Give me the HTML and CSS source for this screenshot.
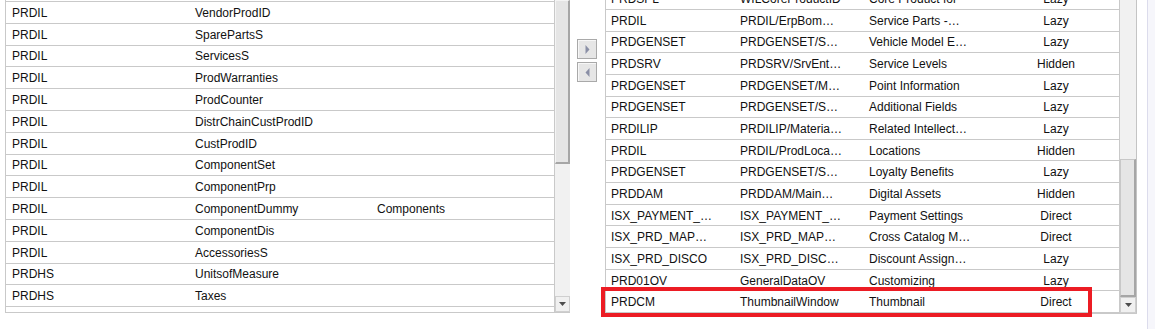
FILE: index.html
```html
<!DOCTYPE html>
<html lang="en">
<head>
    <meta charset="UTF-8">
    <title>Assignment Blocks</title>
    <link rel="stylesheet" href="styles.css">
</head>
<body>
    <div class="window">

        <!-- available blocks -->
        <div class="pane pane-left">
            <div class="grid-view">
                <div class="rows rows-left">
                    <div class="row"><span>PRDIL</span><span>VendorProdID</span><span></span></div>
                    <div class="row"><span>PRDIL</span><span>SparePartsS</span><span></span></div>
                    <div class="row"><span>PRDIL</span><span>ServicesS</span><span></span></div>
                    <div class="row"><span>PRDIL</span><span>ProdWarranties</span><span></span></div>
                    <div class="row"><span>PRDIL</span><span>ProdCounter</span><span></span></div>
                    <div class="row"><span>PRDIL</span><span>DistrChainCustProdID</span><span></span></div>
                    <div class="row"><span>PRDIL</span><span>CustProdID</span><span></span></div>
                    <div class="row"><span>PRDIL</span><span>ComponentSet</span><span></span></div>
                    <div class="row"><span>PRDIL</span><span>ComponentPrp</span><span></span></div>
                    <div class="row"><span>PRDIL</span><span>ComponentDummy</span><span>Components</span></div>
                    <div class="row"><span>PRDIL</span><span>ComponentDis</span><span></span></div>
                    <div class="row"><span>PRDIL</span><span>AccessoriesS</span><span></span></div>
                    <div class="row"><span>PRDHS</span><span>UnitsofMeasure</span><span></span></div>
                    <div class="row"><span>PRDHS</span><span>Taxes</span><span></span></div>
                    <div class="row"><span>PRDHS</span><span>GTIN</span><span></span></div>
                </div>
            </div>
            <div class="vscroll vscroll-left">
                <div class="thumb thumb-left"></div>
                <div class="track"></div>
                <div class="scroll-btn">
                    <svg width="7" height="4" viewBox="0 0 7 4"><polygon points="0,0 7,0 3.5,4" fill="#4d4d4d"/></svg>
                </div>
            </div>
        </div>

        <!-- move buttons -->
        <div class="movers">
            <button class="mover">
                <svg width="5" height="9" viewBox="0 0 5 9"><polygon points="0.5,0 4.5,4.5 0.5,9" fill="#8a8fa6"/></svg>
            </button>
            <button class="mover">
                <svg width="5" height="9" viewBox="0 0 5 9"><polygon points="4.5,0 0.5,4.5 4.5,9" fill="#8a8fa6"/></svg>
            </button>
        </div>

        <!-- displayed blocks -->
        <div class="pane pane-right">
            <div class="grid-view">
                <div class="rows rows-right">
                    <div class="row"><span>PRDSPL</span><span>WILCoreProductID</span><span>Core Product for</span><span class="mode">Lazy</span></div>
                    <div class="row"><span>PRDIL</span><span>PRDIL/ErpBom…</span><span>Service Parts -…</span><span class="mode">Lazy</span></div>
                    <div class="row"><span>PRDGENSET</span><span>PRDGENSET/S…</span><span>Vehicle Model E…</span><span class="mode">Lazy</span></div>
                    <div class="row"><span>PRDSRV</span><span>PRDSRV/SrvEnt…</span><span>Service Levels</span><span class="mode">Hidden</span></div>
                    <div class="row"><span>PRDGENSET</span><span>PRDGENSET/M…</span><span>Point Information</span><span class="mode">Lazy</span></div>
                    <div class="row"><span>PRDGENSET</span><span>PRDGENSET/S…</span><span>Additional Fields</span><span class="mode">Lazy</span></div>
                    <div class="row"><span>PRDILIP</span><span>PRDILIP/Materia…</span><span>Related Intellect…</span><span class="mode">Lazy</span></div>
                    <div class="row"><span>PRDIL</span><span>PRDIL/ProdLoca…</span><span>Locations</span><span class="mode">Hidden</span></div>
                    <div class="row"><span>PRDGENSET</span><span>PRDGENSET/S…</span><span>Loyalty Benefits</span><span class="mode">Lazy</span></div>
                    <div class="row"><span>PRDDAM</span><span>PRDDAM/Main…</span><span>Digital Assets</span><span class="mode">Hidden</span></div>
                    <div class="row"><span>ISX_PAYMENT_…</span><span>ISX_PAYMENT_…</span><span>Payment Settings</span><span class="mode">Direct</span></div>
                    <div class="row"><span>ISX_PRD_MAP…</span><span>ISX_PRD_MAP…</span><span>Cross Catalog M…</span><span class="mode">Direct</span></div>
                    <div class="row"><span>ISX_PRD_DISCO</span><span>ISX_PRD_DISC…</span><span>Discount Assign…</span><span class="mode">Lazy</span></div>
                    <div class="row"><span>PRD01OV</span><span>GeneralDataOV</span><span>Customizing</span><span class="mode">Lazy</span></div>
                    <div class="row"><span>PRDCM</span><span>ThumbnailWindow</span><span>Thumbnail</span><span class="mode">Direct</span></div>
                </div>
            </div>
            <div class="vscroll vscroll-right">
                <div class="track track-top"></div>
                <div class="thumb thumb-right"></div>
                <div class="scroll-btn">
                    <svg width="7" height="4" viewBox="0 0 7 4"><polygon points="0,0 7,0 3.5,4" fill="#4d4d4d"/></svg>
                </div>
            </div>
            <!-- rote Markierung um die letzte Zeile -->
            <i class="highlight"></i>
        </div>

        <div class="edge"></div>
    </div>
</body>
</html>
```

FILE: styles.css
```css
/* Grundlayout */
* {
    margin: 0;
    padding: 0;
    box-sizing: border-box;
}

body {
    font-family: "Liberation Sans", Arial, sans-serif;
    font-size: 12px;
    color: #111;
    background: #fff;
    width: 1155px;
    height: 329px;
    overflow: hidden;
}

.window {
    display: flex;
    align-items: flex-start;
    height: 329px;
}

/* Listen */
.pane {
    display: flex;
    border-bottom: 1px solid #c9c9c9;
}

.pane-left {
    margin-left: 5px;
    width: 565px;
    height: 313px;
}

.pane-right {
    position: relative;
    width: 532px;
    height: 314px;
}

.grid-view {
    flex: 1;
    border-left: 1px solid #c9c9c9;
    border-right: 1px solid #c9c9c9;
    overflow: hidden;
}

.rows-left {
    margin-top: 1px;
    border-top: 1px solid #c9c9c9;
}

.rows-right {
    margin-top: -11.65px;
}

.row {
    display: grid;
    height: 21.65px;
    align-items: center;
    border-bottom: 1px solid #c9c9c9;
    white-space: nowrap;
}

.rows-left .row {
    grid-template-columns: 183px 182px 1fr;
    height: 21.8px;
}

.rows-left .row span {
    padding-left: 6px;
}

.rows-right .row {
    grid-template-columns: 129px 129px 129px 1fr;
}

.rows-right .row span {
    padding-left: 5px;
}

.rows-right .row .mode {
    padding-left: 0;
    text-align: center;
}

.row span {
    overflow: hidden;
    line-height: 14px;
    padding-top: 1px;
}

/* Markierung */
.highlight {
    position: absolute;
    left: -4px;
    bottom: -4px;
    width: 491px;
    height: 30px;
    border: 4.5px solid #ec1c24;
}

/* Scrollbalken */
.vscroll {
    display: flex;
    flex-direction: column;
    background: #f1f1f1;
}

.vscroll-left {
    width: 15px;
}

.vscroll-right {
    width: 17px;
    border-right: 1px solid #c4c4c4;
}

.thumb {
    background: #e5e5e5;
    border: 1px solid #f4f4f4;
    border-right: 2px solid #a6a6a6;
    border-bottom: 2px solid #a6a6a6;
}

.thumb-left {
    height: 164px;
}

.thumb-right {
    flex: 1;
    border-top: 1px solid #c8c8c8;
    border-left: 1px solid #c8c8c8;
}

.track {
    flex: 1;
}

.track-top {
    flex: none;
    height: 159px;
}

.scroll-btn {
    height: 16px;
    display: flex;
    align-items: center;
    justify-content: center;
    background: #f0f0f0;
    border: 1px solid #cfcfcf;
}

/* Verschieben */
.movers {
    width: 35px;
    padding: 39px 0 0 7px;
    display: flex;
    flex-direction: column;
    gap: 3px;
}

.mover {
    width: 20px;
    height: 20px;
    display: flex;
    align-items: center;
    justify-content: center;
    background: #e6e6e6;
    border: 1px solid #a9a9a9;
    box-shadow: inset 1px 1px 0 #f7f7f7;
}

.edge {
    flex: 1;
    height: 329px;
    margin-left: 10px;
    border-left: 1px solid #dcdcec;
    background: #f6f6fb;
}
```
